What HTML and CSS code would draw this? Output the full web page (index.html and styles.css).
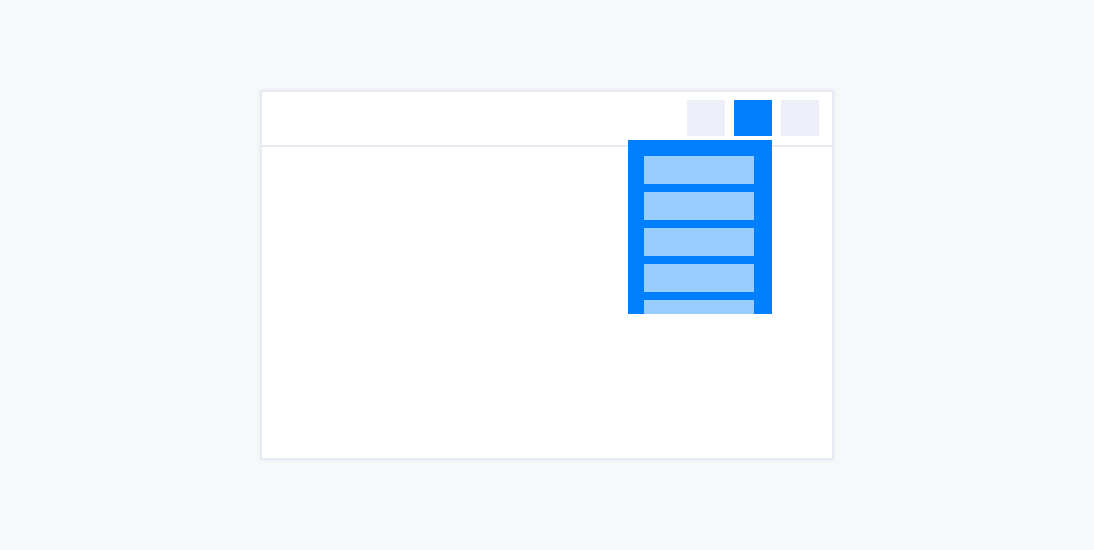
FILE: index.html
```html
<!DOCTYPE html>
<html>
<head>
<meta charset="utf-8">
<link rel="stylesheet" href="styles.css">
</head>
<body>
<div class="stage">
  <div class="card">
    <div class="card-header">
      <div class="btn btn-gray"></div>
      <div class="btn-wrap">
        <div class="btn btn-blue"></div>
        <div class="dropdown">
          <div class="item"></div>
          <div class="item"></div>
          <div class="item"></div>
          <div class="item"></div>
          <div class="item"></div>
          <div class="item"></div>
        </div>
      </div>
      <div class="btn btn-gray"></div>
    </div>
    <div class="card-body"></div>
  </div>
</div>
</body>
</html>
```
FILE: styles.css
```css
html, body {
  margin: 0;
  padding: 0;
  background: #f7f8fa;
  font-family: "Liberation Sans", Arial, sans-serif;
}
.stage {
  width: 1094px;
  height: 550px;
  display: flex;
  align-items: center;
  justify-content: center;
}
.card {
  box-sizing: border-box;
  width: 574px;
  height: 370px;
  background: #ffffff;
  border: 2px solid #e7eaf2;
  box-shadow: 0 0 3px rgba(210, 216, 230, 0.5);
  display: flex;
  flex-direction: column;
}
.card-header {
  height: 55px;
  box-sizing: border-box;
  padding: 8px 13px 9px 0;
  border-bottom: 2px solid #e8ebf1;
  display: flex;
  justify-content: flex-end;
  gap: 9px;
}
.btn {
  width: 38px;
  height: 36px;
}
.btn-gray {
  background: #edf0f8;
}
.btn-blue {
  background: #0080ff;
}
.btn-wrap {
  position: relative;
}
.dropdown {
  position: absolute;
  top: 40px;
  right: 0;
  width: 144px;
  height: 174px;
  box-sizing: border-box;
  padding: 16px 18px 0 16px;
  background: #0080ff;
  overflow: hidden;
  display: flex;
  flex-direction: column;
  gap: 8px;
  z-index: 2;
}
.item {
  flex: none;
  height: 28px;
  background: #99ccff;
}
.card-body {
  flex: 1;
}
```
